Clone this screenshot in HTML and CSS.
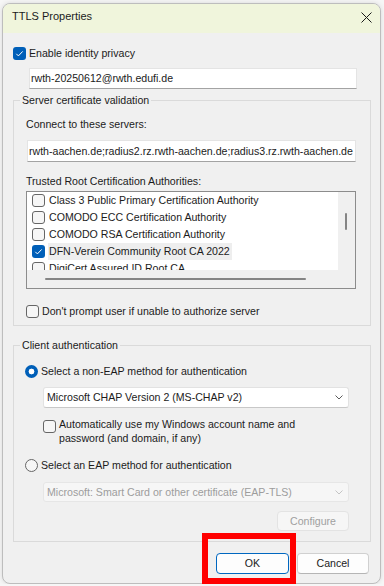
FILE: index.html
```html
<!DOCTYPE html>
<html lang="en">
<head>
  <meta charset="UTF-8" />
  <meta name="viewport" content="width=device-width, initial-scale=1.0"/>
  <title>TTLS Properties</title>
  <link rel="stylesheet" href="styles.css">
</head>
<body>
  <div class="window">
    <!-- Title bar -->
    <div class="titlebar">
      <span class="title">TTLS Properties</span>
      <svg class="close" width="11" height="11" viewBox="0 0 11 11">
        <path d="M0.5 0.5 L10.5 10.5 M10.5 0.5 L0.5 10.5" stroke="#1a1a1a" stroke-width="1" fill="none"/>
      </svg>
    </div>

    <div class="check-row privacy">
      <span class="box checked"><svg width="13" height="13" viewBox="0 0 13 13"><path d="M3.3 6.8 L5.4 8.9 L9.7 4.4" stroke="#fff" stroke-width="1" fill="none"/></svg></span>
      <span>Enable identity privacy</span>
    </div>
    <div class="textbox identity">rwth-20250612@rwth.edufi.de</div>

    <!-- Server certificate validation -->
    <fieldset class="group server">
      <legend>Server certificate validation</legend>
      <div class="label connect">Connect to these servers:</div>
      <div class="textbox servers">rwth-aachen.de;radius2.rz.rwth-aachen.de;radius3.rz.rwth-aachen.de</div>
      <div class="label trusted">Trusted Root Certification Authorities:</div>
      <div class="listbox">
        <div class="list-items">
          <div class="item"><span class="box"></span><span class="item-text">Class 3 Public Primary Certification Authority</span></div>
          <div class="item"><span class="box"></span><span class="item-text">COMODO ECC Certification Authority</span></div>
          <div class="item"><span class="box"></span><span class="item-text">COMODO RSA Certification Authority</span></div>
          <div class="item selected"><span class="box checked"><svg width="13" height="13" viewBox="0 0 13 13"><path d="M3.3 6.8 L5.4 8.9 L9.7 4.4" stroke="#fff" stroke-width="1" fill="none"/></svg></span><span class="item-text">DFN-Verein Community Root CA 2022</span></div>
          <div class="item"><span class="box"></span><span class="item-text">DigiCert Assured ID Root CA</span></div>
        </div>
        <div class="vscroll"><span class="thumb"></span></div>
        <div class="hscroll"><span class="thumb"></span></div>
      </div>
      <div class="check-row prompt">
        <span class="box"></span>
        <span>Don't prompt user if unable to authorize server</span>
      </div>
    </fieldset>

    <!-- Client authentication -->
    <fieldset class="group client">
      <legend>Client authentication</legend>
      <div class="check-row radio-row first">
        <span class="radio on"></span>
        <span>Select a non-EAP method for authentication</span>
      </div>
      <div class="dropdown chap">
        <span>Microsoft CHAP Version 2 (MS-CHAP v2)</span>
        <svg width="8" height="5" viewBox="0 0 8 5"><path d="M0.5 0.5 L4 4 L7.5 0.5" stroke="#5c5c5c" stroke-width="1" fill="none"/></svg>
      </div>
      <div class="check-row auto">
        <span class="box"></span>
        <span>Automatically use my Windows account name and<br>password (and domain, if any)</span>
      </div>
      <div class="check-row radio-row second">
        <span class="radio"></span>
        <span>Select an EAP method for authentication</span>
      </div>
      <div class="dropdown disabled">
        <span>Microsoft: Smart Card or other certificate (EAP-TLS)</span>
        <svg width="8" height="5" viewBox="0 0 8 5"><path d="M0.5 0.5 L4 4 L7.5 0.5" stroke="#c4c4c4" stroke-width="1" fill="none"/></svg>
      </div>
      <div class="btn configure">Configure</div>
    </fieldset>

    <div class="buttons">
      <div class="btn ok">OK</div>
      <div class="btn">Cancel</div>
    </div>
  </div>

  <!-- red annotation box -->
  <div class="highlight"></div>
</body>
</html>
```

FILE: styles.css
```css
* {
  box-sizing: border-box;
}
body {
  margin: 0;
  background-color: #f6f6f6;
  font-family: "Liberation Sans", Arial, sans-serif;
  font-size: 10.6px;
  line-height: 13px;
  color: #1b1b1b;
}
.window {
  margin: 3px 0 0 2px;
  width: 379px;
  height: 581px;
  background-color: #f0f0f0;
  border: 1px solid #bdbdbd;
  border-radius: 8px;
  overflow: hidden;
  box-shadow: 0 0 5px rgba(0, 0, 0, 0.12);
}
.titlebar {
  display: flex;
  align-items: flex-start;
  height: 29px;
  padding: 6px 8px 0 9px;
  background-color: #f0f5dc;
}
.title {
  font-size: 11px;
}
.close {
  margin: 2px 0 0 auto;
}

/* checkboxes and radios */
.check-row {
  display: flex;
  align-items: center;
  gap: 3px;
}
.box {
  flex: none;
  width: 13px;
  height: 13px;
  border: 1px solid #666;
  border-radius: 3px;
  background-color: #f6f6f6;
}
.box.checked {
  border: none;
  background-color: #005fb8;
}
.box svg {
  display: block;
}
.radio {
  flex: none;
  width: 13px;
  height: 13px;
  border: 1px solid #666;
  border-radius: 50%;
  background-color: #f6f6f6;
}
.radio.on {
  border: none;
  background: radial-gradient(circle, #fff 0 2.6px, #005fb8 3.2px);
}

.privacy {
  margin: 14px 0 0 10px;
}
.textbox {
  height: 21px;
  padding: 0 1px;
  display: flex;
  align-items: center;
  white-space: nowrap;
  overflow: hidden;
  background-color: #fff;
  border: 1px solid #e4e4e4;
  border-bottom-color: #a3a3a3;
}
.identity {
  margin: 8px 0 0 26px;
  width: 328px;
}

/* group boxes */
.group {
  margin: 0 0 0 10px;
  width: 358px;
  padding: 0;
  border: 1px solid #dadada;
  min-width: 0;
}
.group legend {
  padding: 0 2px;
  margin-left: 6px;
}
.server {
  margin-top: 5px;
  padding-bottom: 7px;
}
.label {
  margin-left: 12px;
}
.connect {
  margin-top: 11px;
}
.servers {
  margin: 9px 0 0 13px;
  width: 329px;
  height: 22px;
}
.trusted {
  margin-top: 13px;
}
.listbox {
  margin: 3px 0 0 12px;
  width: 330px;
  height: 98px;
  border: 1px solid #8c8c8c;
  display: grid;
  grid-template-columns: 311px 17px;
  grid-template-rows: 78px 18px;
}
.list-items {
  background-color: #fff;
  overflow: hidden;
}
.item {
  display: flex;
  align-items: center;
  height: 17px;
  padding-left: 5px;
  gap: 3px;
  white-space: nowrap;
}
.item-text {
  padding: 0 2px 0 1px;
  line-height: 17px;
}
.item.selected .item-text {
  background-color: #eeeeee;
}
.vscroll {
  background-color: #f0f0f0;
}
.vscroll .thumb {
  display: block;
  margin: 21px 0 0 7px;
  width: 2px;
  height: 17px;
  border-radius: 1px;
  background-color: #858585;
}
.hscroll {
  grid-column: 1 / 3;
  background-color: #f0f0f0;
}
.hscroll .thumb {
  display: block;
  margin: 8px 0 0 18px;
  width: 261px;
  height: 2px;
  border-radius: 1px;
  background-color: #858585;
}
.prompt {
  margin: 16px 0 0 12px;
}

.client {
  margin-top: 13px;
  padding-bottom: 10px;
}
.radio-row {
  margin-left: 11px;
}
.radio-row.first {
  margin-top: 13px;
}
.radio-row.second {
  margin-top: 14px;
}
.dropdown {
  display: flex;
  align-items: center;
  justify-content: space-between;
  margin: 9px 0 0 29px;
  width: 306px;
  height: 21px;
  padding: 0 5px 0 3px;
  background-color: #fff;
  border: 1px solid #e2e2e2;
  border-bottom-color: #c8c8c8;
  border-radius: 3px;
  white-space: nowrap;
}
.dropdown.disabled {
  margin-top: 10px;
  height: 20px;
  color: #9d9d9d;
  background-color: #f6f6f6;
  border-color: #e6e6e6;
}
.auto {
  align-items: flex-start;
  margin: 10px 0 0 29px;
  line-height: 13.5px;
}
.auto .box {
  margin-top: 2px;
}

/* buttons */
.btn {
  display: flex;
  align-items: center;
  justify-content: center;
  width: 72px;
  height: 21px;
  background-color: #fdfdfd;
  border: 1px solid #d0d0d0;
  border-bottom-color: #b5b5b5;
  border-radius: 4px;
}
.configure {
  margin: 9px 0 0 263px;
  height: 20px;
  color: #a0a0a0;
  background-color: #f6f6f6;
  border-color: #e3e3e3;
}
.buttons {
  display: flex;
  justify-content: flex-end;
  gap: 8px;
  margin-top: 11px;
  padding-right: 11px;
}
.btn.ok {
  width: 73px;
  border-color: #0067c0;
}
.highlight {
  position: absolute;
  left: 202px;
  top: 533px;
  width: 94px;
  height: 51px;
  border: 6px solid #ff0000;
}
```
